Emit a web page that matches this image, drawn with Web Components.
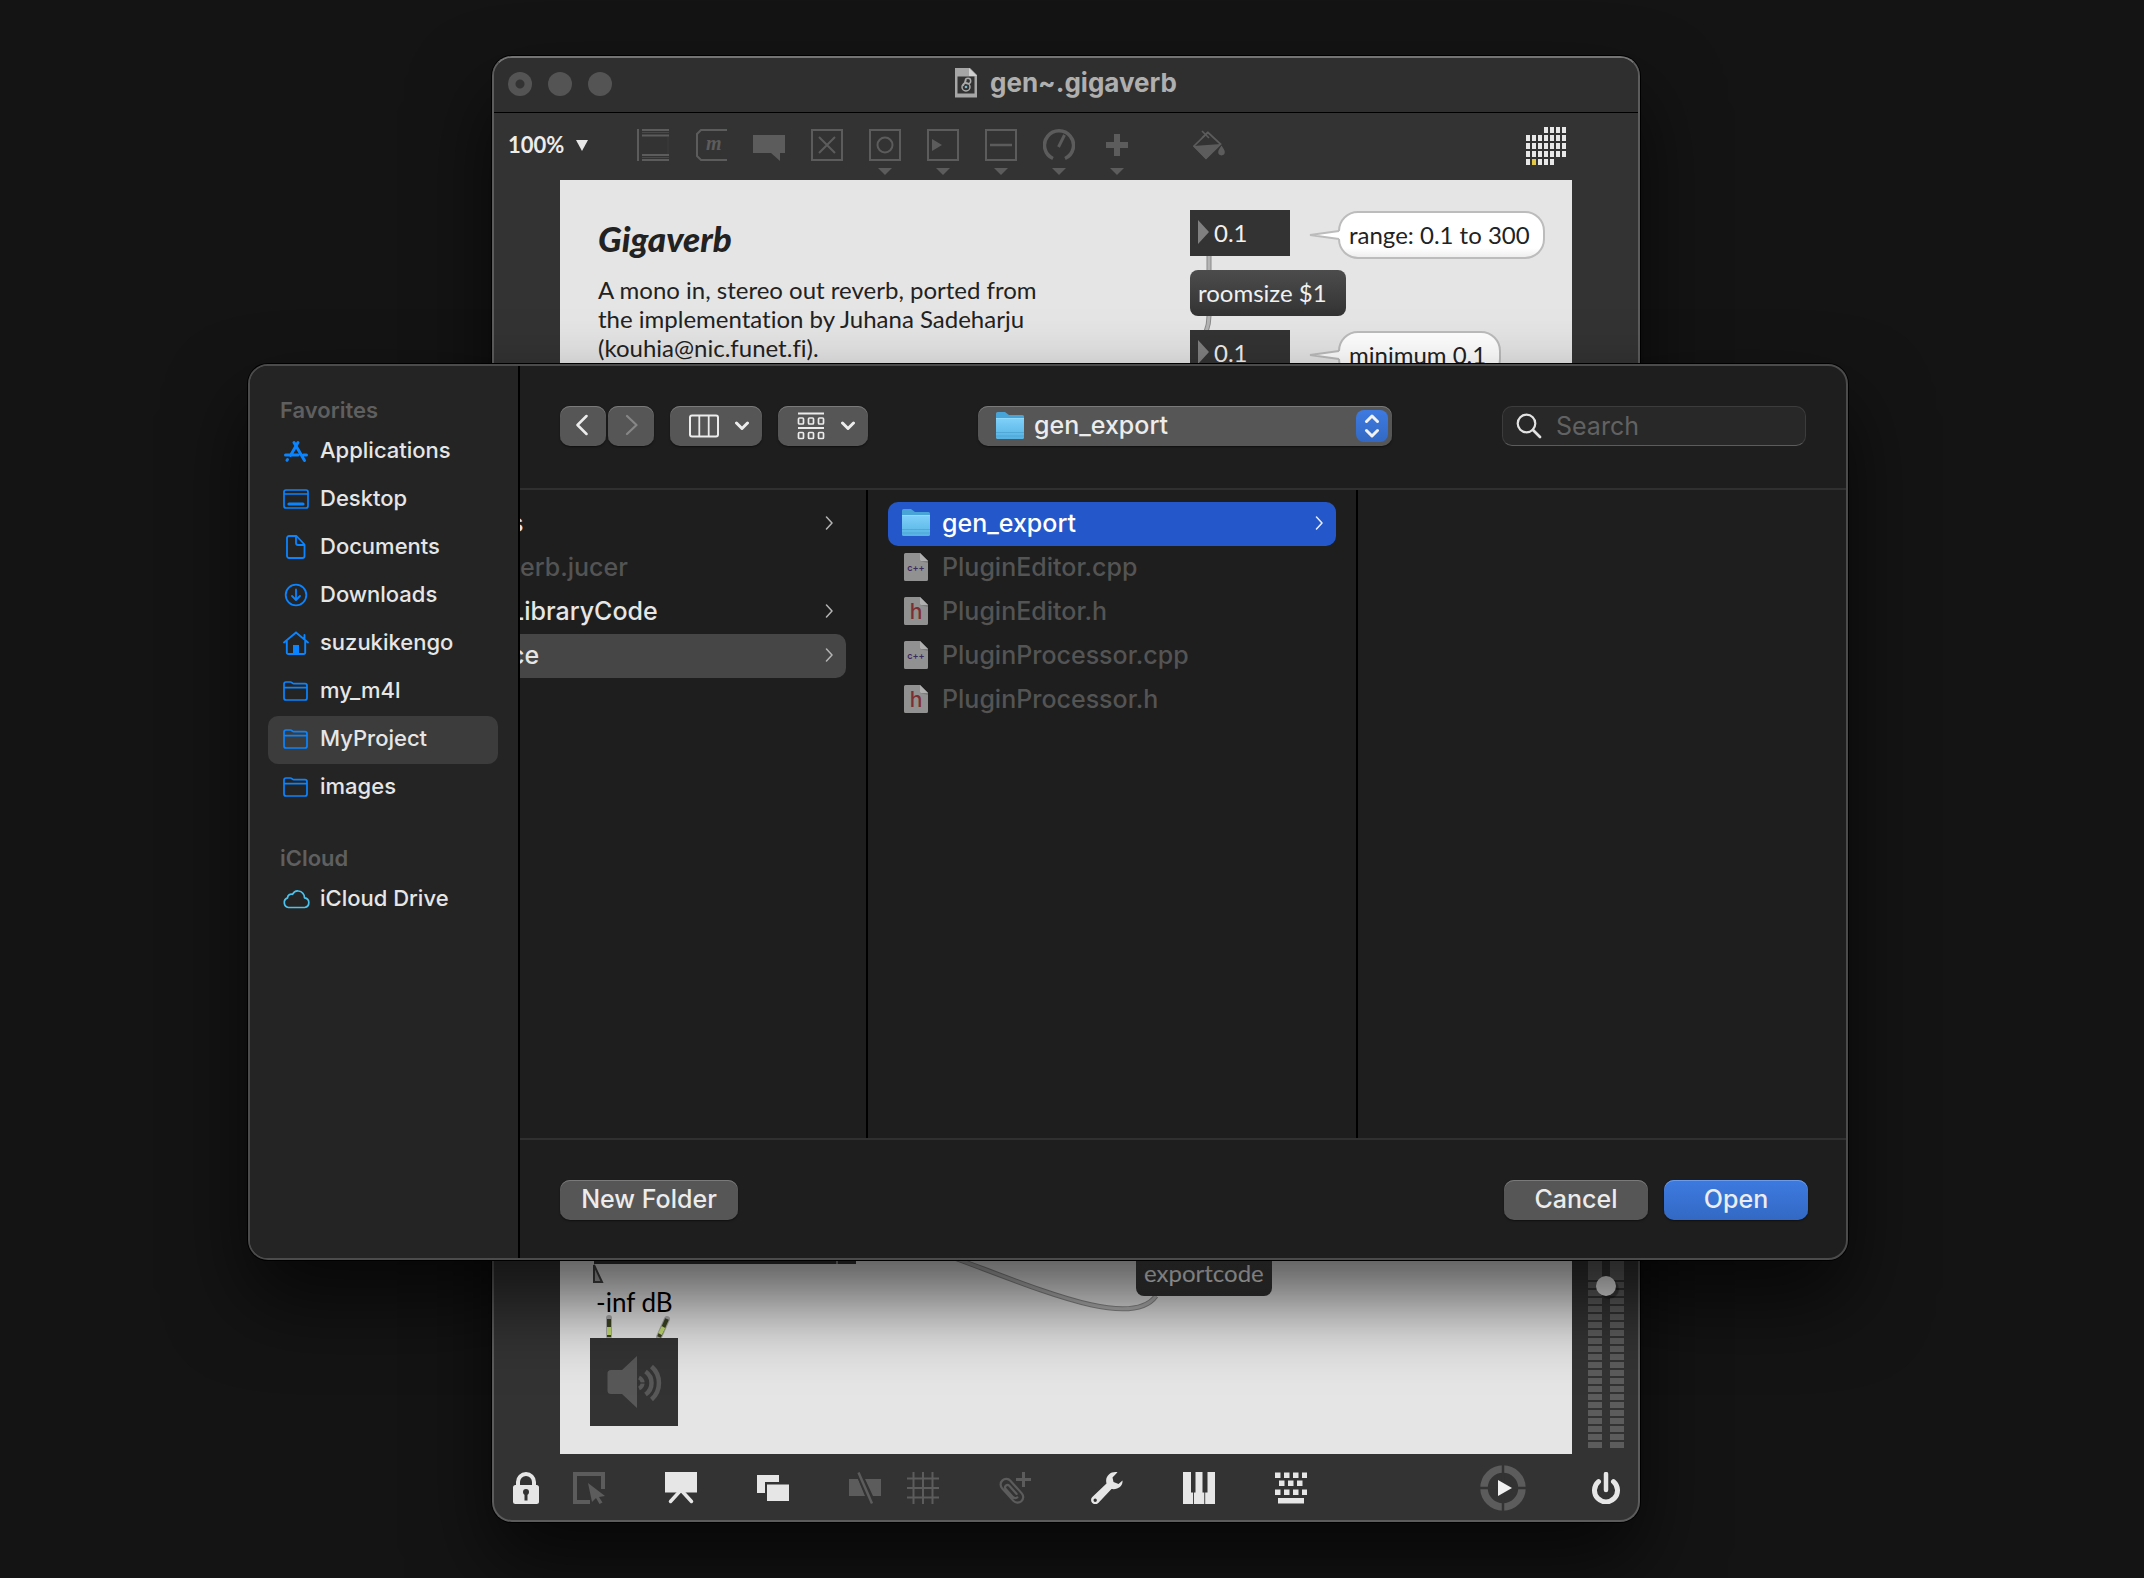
<!DOCTYPE html>
<html lang="en">
<head>
<meta charset="utf-8">
<title>gen~.gigaverb</title>
<style>
  html, body { margin: 0; height: 100%; }
  body { background: #141414; font-family: Inter, "Liberation Sans", sans-serif; overflow: hidden; }
</style>
</head>
<body>
<desk-top>
  <patcher-window heading="gen~.gigaverb">
    <patch-canvas></patch-canvas>
  </patcher-window>
  <open-panel>
    <side-group slot="places" label="Favorites">
      <side-item icon="apps">Applications</side-item>
      <side-item icon="desktop">Desktop</side-item>
      <side-item icon="doc">Documents</side-item>
      <side-item icon="download">Downloads</side-item>
      <side-item icon="home">suzukikengo</side-item>
      <side-item icon="folder">my_m4l</side-item>
      <side-item icon="folder" current>MyProject</side-item>
      <side-item icon="folder">images</side-item>
    </side-group>
    <side-group slot="places" label="iCloud">
      <side-item icon="cloud">iCloud Drive</side-item>
    </side-group>
    <file-column slot="columns" scrolled>
      <file-row more>s</file-row>
      <file-row dim>erb.jucer</file-row>
      <file-row more>LibraryCode</file-row>
      <file-row more open>ce</file-row>
    </file-column>
    <file-column slot="columns">
      <file-row icon="bluefolder" more selected>gen_export</file-row>
      <file-row icon="cpp" dim>PluginEditor.cpp</file-row>
      <file-row icon="header" dim>PluginEditor.h</file-row>
      <file-row icon="cpp" dim>PluginProcessor.cpp</file-row>
      <file-row icon="header" dim>PluginProcessor.h</file-row>
    </file-column>
    <file-column slot="columns"></file-column>
  </open-panel>
</desk-top>

<script>
const G = '#5c5c5c', W = '#e6e6e6', B = '#0a84ff';
const svg = (w, h, body) => `<svg width="${w}" height="${h}" viewBox="0 0 ${w} ${h}" fill="none" aria-hidden="true">${body}</svg>`;
const frame = `<path d="M1 1h30v30H1z" stroke="${G}" stroke-width="2"/>`;

const gridLogo = () => {
  let s = '';
  for (let r = 0; r < 5; r++) for (let c = 0; c < 7; c++) {
    if ((r === 0 && c < 3) || (r === 4 && c > 4)) continue;
    s += `<rect x="${c * 6}" y="${r * 8}" width="4" height="6" fill="${r === 4 && c === 1 ? '#e2c846' : '#e8e8e8'}"/>`;
  }
  return svg(40, 38, s);
};
const keys = () => {
  let s = '';
  [[0, 0, 4], [4, 8, 3], [0, 17, 4]].forEach(([x, y, n]) => {
    for (let i = 0; i < n; i++) s += `<rect x="${x + i * 9}" y="${y + 0.5}" width="5.5" height="5.5" fill="${W}"/>`;
  });
  return svg(32, 32, s + `<rect x="3" y="26" width="26" height="5.5" fill="${W}"/>`);
};
const page = body => svg(24, 28, `<path d="M1.500 0H16l8 8v18.500a1.500 1.500 0 0 1-1.500 1.500h-21A1.500 1.500 0 0 1 0 26.500v-25A1.500 1.500 0 0 1 1.500 0z" fill="#919191"/><path d="M16 0l8 8h-7a1 1 0 0 1-1-1z" fill="#b0b0b0"/><path d="M16 7a1 1 0 0 0 1 1h7v2l-8-2z" fill="#7c7c7c"/>${body}`);

const ICONS = {
  object: svg(32, 32, `<path d="M1 0v32M5 1h27M5 6.500h27M5 26h27M5 31h27" stroke="${G}" stroke-width="2"/><path d="M5 3.500h27M5 28.500h27" stroke="#484848"/><path d="M31 8v17" stroke="#3c3c3c"/>`),
  message: svg(32, 32, `<path d="M32 1H6L2 5v22l4 4h26" stroke="${G}" stroke-width="2"/><text x="11" y="21" font-family="Liberation Serif, serif" font-style="italic" font-weight="bold" font-size="20" fill="${G}">m</text>`),
  comment: svg(32, 32, `<path d="M0 6h32v18h-5v8l-9-8H0z" fill="${G}"/>`),
  toggle: svg(32, 32, frame + `<path d="M8 8l16 16M24 8L8 24" stroke="${G}" stroke-width="2"/>`),
  bang: svg(32, 32, frame + `<circle cx="16" cy="16" r="7.500" stroke="${G}" stroke-width="2"/>`),
  playbar: svg(32, 32, frame + `<path d="M5 10l10 6-10 6z" fill="${G}"/>`),
  slider: svg(32, 32, frame + `<path d="M5 16h22" stroke="${G}" stroke-width="2.500"/>`),
  dial: svg(32, 32, `<path d="M10 29.500A14.500 14.500 0 1 1 22 29.500" stroke="${G}" stroke-width="3.500"/><path d="M15.500 18l6-12" stroke="${G}" stroke-width="3"/>`),
  plus: svg(32, 32, `<path d="M16 5v22M5 16h22" stroke="${G}" stroke-width="6"/>`),
  bucket: svg(32, 32, `<path d="M1 17L15 3.500 27.500 15 13 29z" stroke="${G}" stroke-width="1.700"/><path d="M0 17l28.500-2L13 30.500z" fill="${G}"/><path d="M9 2l7 7M15 3l-6 6" stroke="${G}" stroke-width="1.600"/><path d="M28.500 16.500c1.500 2.500 3.300 4.500 3.300 6.600a3.300 3.300 0 0 1-6.600 0c0-2.100 1.800-4.100 3.300-6.600z" fill="${G}"/>`),
  caret: svg(14, 7, `<path d="M0 0h14l-7 7z" fill="${G}"/>`),
  logo: gridLogo(),
  lock: svg(32, 32, `<path d="M8 14V10a8 8 0 0 1 16 0v4" stroke="${W}" stroke-width="4"/><rect x="3" y="13" width="26" height="19" rx="2.500" fill="${W}"/><circle cx="16" cy="20" r="3" fill="#333"/><path d="M16 20v8.500" stroke="#333" stroke-width="3"/>`),
  select: svg(32, 32, `<path d="M30 17V2H2v28h15" stroke="${G}" stroke-width="4"/><path d="M15 11l17 13-6 1 3.500 5.500-3 1.500-3.500-6-4 4z" fill="${G}"/>`),
  present: svg(32, 32, `<path d="M0 0h32v20.500H0z" fill="${W}"/><path d="M16 18L5.500 29.500M16 18l10.500 11.500" stroke="${W}" stroke-width="3.500" stroke-linecap="round"/>`),
  windows: svg(32, 32, `<path d="M0 3h22v7H8v11H0z" fill="${W}"/><path d="M10 12.500h22V29H10z" fill="${W}"/>`),
  cordoff: svg(32, 32, `<path d="M0 7h9l7 17H0zM16 7h16v17h-8z" fill="${G}"/><path d="M9.500 0.500L23 31.500" stroke="#333" stroke-width="6"/><path d="M9.500 0.500L23 31.500" stroke="${G}" stroke-width="2.500"/>`),
  grid: svg(32, 32, `<path d="M6.500 0v32M16 0v32M25.500 0v32M0 6.500h32M0 16h32M0 25.500h32" stroke="${G}" stroke-width="2"/>`),
  clip: svg(32, 32, `<path d="M24.500 0v15M17 7.500h15" stroke="${G}" stroke-width="3"/><g transform="translate(12.500 18.500) rotate(-42)"><path d="M1.500 6V-5a2.400 2.400 0 0 0-4.800 0V7a4.700 4.700 0 0 0 0 0M-3.300-5V6a3.300 3.300 0 0 0 3 3M5.700-2V-8a5.600 5.600 0 0 0-11.200 0V9a5.600 5.600 0 0 0 11.200 0V-3" stroke="${G}" stroke-width="2.200" stroke-linecap="round"/></g>`),
  wrench: svg(32, 32, `<path fill-rule="evenodd" d="M26.500 0.300C20-1 13.500 4 15.500 11.500L1.300 25a4.200 4.200 0 0 0 6 6L20.500 17C27 18 32 14 31.500 8.500L27.500 12 22.500 10 21.500 5.500zM4.200 26.500a1.700 1.700 0 1 1 0 3.400 1.700 1.700 0 0 1 0-3.400z" fill="${W}"/>`),
  piano: svg(32, 32, `<path d="M0 0h8v20.500h2V32H0zM12.500 0h7v20.500h1.800V32H10.900V20.500h1.600zM24.500 0H32v32H22.200V20.500h2.300z" fill="${W}"/>`),
  keyboard: keys(),
  transport: svg(46, 46, `<circle cx="23" cy="23" r="19" stroke="${G}" stroke-width="7.500"/><path d="M23 0v46M0 23h46" stroke="#333" stroke-width="2.500"/><path d="M18 15l14 8-14 8z" fill="#f0f0f0"/>`),
  power: svg(32, 32, `<path d="M16 2v16" stroke="${W}" stroke-width="4.500" stroke-linecap="round"/><path d="M8.500 9.700a11.500 11.500 0 1 0 15 0" stroke="${W}" stroke-width="5" stroke-linecap="round"/>`),
  maxdoc: svg(22, 30, `<path d="M0 0h15l7 7v22.500H0z" fill="#a6a6a6"/><path d="M14 0l8 8h-8z" fill="#d0d0d0"/><path d="M2.500 8.500h17v17h-17z" fill="#333"/><circle cx="11" cy="19" r="4" stroke="#aaa" stroke-width="1.500"/><circle cx="13" cy="13" r="2.700" stroke="#aaa" stroke-width="1.500"/><circle cx="11" cy="19" r="1.300" fill="#7fb7c9"/><path d="M8 18l3-6" stroke="#aaa" stroke-width="1.500"/>`),
  apps: svg(28, 28, `<g stroke="${B}" stroke-width="3" stroke-linecap="round"><path d="M12 5.500L22.500 23.500M16 5.500L8.500 18.500M5 23.300l.5-.8M3.500 18H16M21.500 18h3"/></g>`),
  desktop: svg(28, 28, `<rect x="2" y="5" width="24" height="18" rx="2" stroke="${B}" stroke-width="1.700"/><path d="M2 9h24" stroke="${B}" stroke-width="1.500"/><path d="M7 19h14" stroke="${B}" stroke-width="3.200" stroke-linecap="round"/>`),
  doc: svg(28, 28, `<path d="M7 3h7.500l8 8.500V23a2 2 0 0 1-2 2H7a2 2 0 0 1-2-2V5a2 2 0 0 1 2-2zM14 3v7a2 2 0 0 0 2 2h6.500" stroke="${B}" stroke-width="1.800" stroke-linejoin="round"/>`),
  download: svg(28, 28, `<circle cx="14" cy="14" r="10.300" stroke="${B}" stroke-width="1.800"/><path d="M14 8.500v10M10 15l4 4 4-4" stroke="${B}" stroke-width="1.800" stroke-linecap="round" stroke-linejoin="round"/>`),
  home: svg(28, 28, `<path d="M2 13.500L14 3.500l12 10M4.800 12v11.500a1.500 1.500 0 0 0 1.500 1.500h15.400a1.500 1.500 0 0 0 1.500-1.500V12M22.500 10V6" stroke="${B}" stroke-width="1.900" stroke-linecap="round"/><path d="M11 16h6v8.500h-6z" fill="${B}"/>`),
  folder: svg(28, 28, `<path d="M2 7a2 2 0 0 1 2-2h4.500c1.200 0 2 1.700 3.200 1.700H23a2 2 0 0 1 2 2V21a2 2 0 0 1-2 2H4a2 2 0 0 1-2-2zM2 10.700h23" stroke="${B}" stroke-width="1.700"/>`),
  cloud: svg(28, 28, `<path d="M6.500 22.500a5 5 0 0 1-1-9.600c.2-2.800 2.600-4.400 5-3.600C12 6.500 14.500 5.700 16.500 6a6.700 6.700 0 0 1 6 6.800 4.900 4.900 0 0 1 .2 9.700z" stroke="#4ac4ee" stroke-width="1.700" stroke-linejoin="round"/>`),
  bluefolder: svg(28, 28, `<defs><linearGradient id="f" x1="0" y1="0" x2="0" y2="1"><stop offset="0" stop-color="#7fd1fa"/><stop offset="1" stop-color="#56b2e2"/></linearGradient></defs><path d="M0 1.500A1.500 1.500 0 0 1 1.500 0H9l4 3h13.500A1.500 1.500 0 0 1 28 4.500V10H0z" fill="#48a3d6"/><path d="M0 6h28v19.500a1.500 1.500 0 0 1-1.500 1.500h-25A1.500 1.500 0 0 1 0 25.500z" fill="url(#f)"/><path d="M0 6.500h28" stroke="#9be0ff" stroke-opacity=".6"/><path d="M0 20.500h28M0 24h28" stroke="#4299c8" stroke-opacity=".55"/>`),
  cpp: page(`<text x="12" y="18" text-anchor="middle" font-family="Inter, sans-serif" font-weight="600" font-size="9" fill="#3c2c5e">c++</text>`),
  header: page(`<text x="12" y="22" text-anchor="middle" font-family="Inter, sans-serif" font-size="21" fill="#7c2f33">h</text>`),
  back: svg(14, 24, `<path d="M10.500 3L1.500 12l9 9" stroke="#ececec" stroke-width="2.500" stroke-linecap="round" stroke-linejoin="round"/>`),
  forward: svg(14, 24, `<path d="M3 3l9.500 9L3 21" stroke="#868686" stroke-width="2.200" stroke-linecap="round" stroke-linejoin="round"/>`),
  chevron: svg(10, 14, `<path d="M2.500 1l5.500 6-5.500 6" stroke="currentColor" stroke-width="1.500" stroke-linecap="round" stroke-linejoin="round"/>`),
  down: svg(16, 10, `<path d="M2.500 2L8 7.500 13.500 2" stroke="#ececec" stroke-width="3" stroke-linecap="round" stroke-linejoin="round"/>`),
  columns: svg(30, 24, `<rect x="1" y="1.500" width="28" height="21" rx="2" stroke="#ececec" stroke-width="2"/><path d="M10.300 2v20M19.700 2v20" stroke="#ececec" stroke-width="1.800"/>`),
  group: svg(28, 28, `<path d="M1 1.500h26M1 16h26" stroke="#ececec" stroke-width="2"/><g stroke="#ececec" stroke-width="1.700"><rect x="1.500" y="6" width="5" height="6" rx="1"/><rect x="11.500" y="6" width="5" height="6" rx="1"/><rect x="21.500" y="6" width="5" height="6" rx="1"/><rect x="1.500" y="20.500" width="5" height="6" rx="1"/><rect x="11.500" y="20.500" width="5" height="6" rx="1"/><rect x="21.500" y="20.500" width="5" height="6" rx="1"/></g>`),
  updown: svg(16, 24, `<path d="M2.500 7.500L8 2l5.500 5.500M2.500 16.500L8 22l5.500-5.500" stroke="#f2f2f2" stroke-width="3" stroke-linecap="round" stroke-linejoin="round"/>`),
  search: svg(26, 26, `<circle cx="10.500" cy="10.500" r="8.800" stroke="#e2e2e2" stroke-width="2.200"/><path d="M17 17l7 7" stroke="#e2e2e2" stroke-width="2.800" stroke-linecap="round"/>`),
  triangle: svg(12, 11, `<path d="M0 0h12L6 11z" fill="#e8e8e8"/>`),
  speaker: svg(88, 88, `<path d="M17.500 35.500A3.500 3.500 0 0 1 21 32h11l15-14v52L32 56H21a3.500 3.500 0 0 1-3.500-3.500z" fill="#585858"/><g stroke="#585858" stroke-width="4.500"><path d="M49 39.500a6 6 0 0 1 0 11" stroke-width="4"/><path d="M55.500 33.500a14 14 0 0 1 0 23"/><path d="M61.500 28.500a22 22 0 0 1 0 33"/></g><path d="M47.500 45h9" stroke="#333" stroke-width="1.200"/>`)
};

class Base extends HTMLElement {
  connectedCallback() {
    if (this.shadowRoot) return;
    this.attachShadow({ mode: 'open' }).innerHTML = this.view();
  }
  attr(n, d = '') { return this.getAttribute(n) ?? d; }
}
const define = (name, cls) => customElements.define(name, cls);

define('ui-icon', class extends Base {
  view() { return `<style>:host{display:inline-flex;flex:none}svg{display:block}</style>${ICONS[this.attr('name')] || ''}`; }
});

define('desk-top', class extends Base {
  view() {
    return `<style>
      :host{display:block;position:relative;height:100vh;overflow:hidden}
      ::slotted(*){position:absolute;box-sizing:border-box;overflow:hidden;border:2px solid}
      ::slotted(patcher-window){inset:56px 504px 56px 492px;border-color:#747474 #5c5c5c #5c5c5c;border-radius:20px;box-shadow:0 0 0 1px #000,0 40px 80px rgba(0,0,0,.65)}
      ::slotted(open-panel){inset:364px 296px 318px 248px;border-color:#4b4b4b;border-radius:20px;box-shadow:0 0 0 1px #000,0 40px 80px rgba(0,0,0,.65)}
    </style><slot></slot>`;
  }
});

define('tool-button', class extends Base {
  view() {
    return `<style>
      :host{display:block;flex:none}
      button{display:flex;flex-direction:column;align-items:center;gap:7px;padding:0;border:0;background:none}
    </style><button type="button" aria-label="${this.attr('label')}"><ui-icon name="${this.attr('icon')}"></ui-icon>${this.hasAttribute('menu') ? '<ui-icon name="caret"></ui-icon>' : ''}</button>`;
  }
});

define('patcher-window', class extends Base {
  view() {
    const t = (icon, label, menu = '') => `<tool-button icon="${icon}" label="${label}" ${menu}></tool-button>`;
    return `<style>
      :host{display:flex;flex-direction:column;background:#333}
      header{display:flex;align-items:center;height:54px;background:#2f2f2f;border-bottom:1px solid #000;position:relative}
      .lights{display:flex;gap:16px;padding:0 0 2px 14px}
      .lights button{width:24px;height:24px;border:0;padding:0;border-radius:50%;background:#545454}
      .lights button:first-child{background:radial-gradient(circle,#333 0 4px,#545454 5px)}
      .title{position:absolute;inset:0;display:flex;align-items:center;justify-content:center;gap:13px;margin:0;padding-bottom:4px;font:700 26px/32px Inter,sans-serif;color:#afafaf;pointer-events:none}
      .tools{display:flex;align-items:flex-start;height:51px;padding:16px 72px 0 14px;gap:26px}
      .zoom{display:flex;align-items:center;gap:11px;width:103px;height:32px}
      select{appearance:none;border:0;background:none;padding:0;margin:0;color:#ececec;font:700 22px/28px Lato,sans-serif}
      .gap{margin-left:34px}
      .push{margin:-2px 0 0 auto}
      .middle{flex:1;display:flex;min-height:0}
      .rail{width:66px;flex:none;display:flex;justify-content:center;align-items:flex-end}
      ::slotted(patch-canvas){flex:1}
      input{appearance:none;writing-mode:vertical-lr;direction:rtl;width:36px;height:240px;margin:0 0 6px 2px;
        background:
          linear-gradient(90deg,transparent 14px,#333 14px 22px,transparent 22px),
          repeating-linear-gradient(to top,#5c5c5c 0 6px,#333 6px 8px) bottom/100% 168px no-repeat,
          #5c5c5c}
      input::-webkit-slider-runnable-track{width:36px;height:240px}
      input::-webkit-slider-thumb{appearance:none;width:20px;height:20px;margin-left:8px;border-radius:50%;background:#e8e8e8;box-shadow:3px 3px 1px rgba(0,0,0,.35)}
      footer{display:flex;align-items:center;gap:60px;height:66px;padding:2px 16px 0;box-sizing:border-box}
      .set{display:flex;gap:26px}.first{gap:31px}
      .run{gap:64px;align-items:center;margin-left:auto}
    </style>
    <header>
      <div class="lights"><button aria-label="Close"></button><button aria-label="Minimize"></button><button aria-label="Zoom"></button></div>
      <h1 class="title"><ui-icon name="maxdoc"></ui-icon><span>${this.attr('heading')}</span></h1>
    </header>
    <div class="tools">
      <label class="zoom"><select aria-label="Zoom level"><option>100%</option></select><ui-icon name="triangle"></ui-icon></label>
      ${t('object', 'Object')}${t('message', 'Message')}${t('comment', 'Comment')}${t('toggle', 'Toggle')}
      ${t('bang', 'Button', 'menu')}${t('playbar', 'Playlist', 'menu')}${t('slider', 'Slider', 'menu')}${t('dial', 'Dial', 'menu')}${t('plus', 'Add', 'menu')}
      <tool-button class="gap" icon="bucket" label="Format"></tool-button>
      <ui-icon class="push" name="logo"></ui-icon>
    </div>
    <div class="middle">
      <div class="rail"></div><slot></slot>
      <div class="rail"><input type="range" min="0" max="100" value="69" aria-label="Output level"></div>
    </div>
    <footer>
      <div class="set first">${t('lock', 'Lock')}${t('select', 'Operate while unlocked')}</div>
      ${t('present', 'Presentation')}${t('windows', 'New view')}
      <div class="set">${t('cordoff', 'Patch cords')}${t('grid', 'Grid')}</div>
      ${t('clip', 'Add clipping')}${t('wrench', 'Debug')}${t('piano', 'MIDI')}${t('keyboard', 'Keyboard')}
      <div class="set run">${t('transport', 'Transport')}${t('power', 'Audio on/off')}</div>
    </footer>`;
  }
});

define('number-box', class extends Base {
  view() {
    return `<style>:host{display:flex;align-items:center;gap:5px;box-sizing:border-box;width:100px;height:46px;padding:0 0 2px 8px;background:#333;color:#f0f0f0}
    i{border:12px solid transparent;border-left:11px solid #808080;border-right:0}</style><i></i><slot></slot>`;
  }
});
define('message-box', class extends Base {
  view() {
    return `<style>:host{display:flex;align-items:center;box-sizing:border-box;height:46px;padding:0 0 2px 8px;border-radius:8px;background:linear-gradient(#4c4c4c,#333);color:#f0f0f0}</style><slot></slot>`;
  }
});
define('bubble-note', class extends Base {
  view() {
    return `<style>:host{display:flex}svg{display:block;flex:none;margin:18px -2px 0 0;position:relative}
    div{display:flex;align-items:center;box-sizing:border-box;height:48px;padding:0 13px 2px 9px;border:2px solid #bcbcbc;border-radius:20px;background:linear-gradient(#fff 80%,#eee)}</style>
    <svg width="32" height="12" viewBox="0 0 32 12"><path d="M32 2L2 6l30 4z" fill="#fff"/><path d="M31 2L2 6l29 4" fill="none" stroke="#bcbcbc" stroke-width="2"/></svg><div><slot></slot></div>`;
  }
});

define('patch-canvas', class extends Base {
  view() {
    return `<style>
      :host{display:block;position:relative;overflow:hidden;background:#e5e5e5;color:#222;font:400 24px/29px Lato,sans-serif;font-variant-ligatures:none}
      /* nodes of the patch sit freely on the canvas */
      .n,.cords{position:absolute}
      h2{margin:0;font:italic 900 35px/42px Lato,sans-serif}
      p{margin:0;white-space:nowrap}
      .meter{width:262px;height:24px;background:linear-gradient(90deg,#333 242px,#888 242px 244px,#333 244px)}
      .dac{width:88px;height:88px;padding:0;border:0;background:#333}
      .level{color:#000;font-size:26px}
    </style>
    <svg class="cords" style="left:0;top:0" width="1012" height="1274" viewBox="0 0 1012 1274" fill="none">
      <g stroke="#8a8a8a" stroke-width="5"><path d="M649 76v14M649 136q0 8-3 16"/><path d="M378 1072C470 1105 570 1152 596 1116"/></g>
      <g stroke="#b4b4b4" stroke-width="3"><path d="M649 76v14M649 136q0 8-3 16"/><path d="M378 1072C470 1105 570 1152 596 1116"/></g>
      <path d="M34 1085l8 17h-8z" fill="#aaa" stroke="#444" stroke-width="2"/>
      <g stroke-width="6" stroke="#aaa" stroke-linecap="round"><path d="M49 1138v18M107 1139l-8 18"/></g>
      <g stroke-width="4" stroke="#3b4320"><path d="M49 1139v18M107 1139l-8 18"/></g>
      <g stroke-width="4" stroke="#c3dd72"><path d="M49 1147v8M103.500 1147l-3.500 7"/></g>
    </svg>
    <h2 class="n" style="left:38px;top:37px">Gigaverb</h2>
    <p class="n" style="left:38px;top:95px">A mono in, stereo out reverb, ported from<br>the implementation by Juhana Sadeharju<br>(kouhia@nic.funet.fi).</p>
    <number-box class="n" style="left:630px;top:30px">0.1</number-box>
    <bubble-note class="n" style="left:748px;top:31px">range: 0.1 to 300</bubble-note>
    <message-box class="n" style="left:630px;top:90px;width:156px">roomsize $1</message-box>
    <number-box class="n" style="left:630px;top:150px">0.1</number-box>
    <bubble-note class="n" style="left:748px;top:151px">minimum 0.1</bubble-note>
    <message-box class="n" style="left:576px;top:1070px;width:136px">exportcode</message-box>
    <div class="n meter" style="left:34px;top:1060px"></div>
    <p class="n level" style="left:36px;top:1108px">-inf dB</p>
    <button class="n dac" style="left:30px;top:1158px" aria-label="Audio output"><ui-icon name="speaker"></ui-icon></button>`;
  }
});

define('side-group', class extends Base {
  view() {
    return `<style>:host{display:block}:host(:not(:first-of-type)){margin-top:36px}
    h2{margin:0;height:28px;padding-left:12px;font:600 22px/20px Inter,sans-serif;color:#5f5f5f}
    nav{display:flex;flex-direction:column}</style><h2>${this.attr('label')}</h2><nav><slot></slot></nav>`;
  }
});
define('side-item', class extends Base {
  view() {
    return `<style>:host{display:block}
    a{display:flex;align-items:center;gap:10px;height:48px;padding:0 14px;box-sizing:border-box;border-radius:10px;color:#e6e6e6;text-decoration:none;font:500 22px/28px Inter,sans-serif}
    span{padding-bottom:4px}ui-icon{padding-bottom:2px}
    :host([current]) a{background:#3c3c3c}</style><a href="#"><ui-icon name="${this.attr('icon')}"></ui-icon><span><slot></slot></span></a>`;
  }
});
define('file-column', class extends Base {
  view() {
    return `<style>:host{display:block;box-sizing:border-box;width:490px;flex:none;padding:12px 20px;border-right:2px solid #000;overflow:hidden}
    :host(:last-of-type){width:auto;flex:1;border:0}
    :host([scrolled]){width:348px;padding-left:0}</style><slot></slot>`;
  }
});
define('file-row', class extends Base {
  view() {
    const icon = this.attr('icon');
    return `<style>
    :host{display:flex;align-items:center;box-sizing:border-box;height:44px;padding:0 12px 2px 14px;border-radius:10px;color:#e6e6e6;font:500 25px/32px Inter,sans-serif}
    :host([dim]){color:#545454;font-weight:450}
    :host([selected]){background:#2457c9;color:#fff}
    :host([open]){background:#464646;border-radius:0 10px 10px 0}
    .i{width:40px;display:flex}
    .i ui-icon{width:28px;justify-content:center}
    .bare{margin-left:-24px}
    :host([dim]) .bare{margin-left:-14px}
    .more{margin-left:auto;color:#b4b4b4}
    :host([selected]) .more{color:#e8eefc}
    </style>${icon ? `<span class="i"><ui-icon name="${icon}"></ui-icon></span>` : ''}<span class="${icon ? '' : 'bare'}"><slot></slot></span>${this.hasAttribute('more') ? '<ui-icon class="more" name="chevron"></ui-icon>' : ''}`;
  }
});
define('push-button', class extends Base {
  view() {
    return `<style>:host{display:block;flex:none}
    button{display:flex;align-items:center;justify-content:center;gap:15px;width:100%;height:40px;padding:0 16px;border:0;border-radius:10px;background:#565656;box-shadow:inset 0 1px 0 #7a7a7a,0 1px 2px rgba(0,0,0,.5);color:#ececec;font:500 25px/36px Inter,sans-serif;white-space:nowrap}
    :host([icon]) button{padding:0 0 2px}
    :host([menu]) button{padding:0 0 0 6px}
    span{padding-bottom:2px}
    :host([primary]) button{background:linear-gradient(#3d7ae0,#3369c4);box-shadow:inset 0 1px 0 #6b9bea,0 1px 2px rgba(0,0,0,.5)}
    </style><button type="button" ${this.hasAttribute('label') ? `aria-label="${this.attr('label')}"` : ''}>${this.hasAttribute('icon') ? `<ui-icon name="${this.attr('icon')}"></ui-icon>${this.hasAttribute('menu') ? '<ui-icon name="down"></ui-icon>' : ''}` : '<span><slot></slot></span>'}</button>`;
  }
});

define('open-panel', class extends Base {
  view() {
    return `<style>
      :host{display:flex;background:#1e1e1e}
      aside{width:268px;flex:none;box-sizing:content-box;border-right:2px solid #000;background:#242424}
      .places{padding:34px 20px 0 18px}
      main{flex:1;min-width:0;display:flex;flex-direction:column}
      header{display:flex;align-items:flex-start;height:82px;padding:40px 40px 0;border-bottom:2px solid #303030}
      .nav{display:flex;gap:2px}
      .nav push-button{width:46px}
      .view{width:92px;margin-left:16px}.sort{width:90px;margin-left:16px}
      .where{display:flex;align-items:center;width:414px;height:40px;box-sizing:border-box;margin:0 auto;padding:0 4px 0 18px;border-radius:10px;background:#565656;box-shadow:inset 0 1px 0 #7a7a7a,0 1px 2px rgba(0,0,0,.5);gap:10px}
      select{appearance:none;flex:1;min-width:0;height:40px;padding:0 0 2px;border:0;background:none;color:#ececec;font:500 25px/36px Inter,sans-serif}
      .step{display:flex;align-items:center;justify-content:center;width:32px;height:32px;border-radius:8px;background:linear-gradient(#3d7ae0,#3369c4)}
      .find{display:flex;align-items:center;gap:14px;width:304px;height:40px;box-sizing:border-box;padding:0 13px;border:1px solid #3c3c3c;border-bottom-color:#5c5c5c;border-radius:10px;background:#282828}
      input{flex:1;min-width:0;border:0;padding:0;background:none;outline:0;color:#e6e6e6;font:400 25px/32px Inter,sans-serif}
      input::placeholder{color:#626262;opacity:1}
      .cols{flex:1;display:flex;min-height:0}
      footer{display:flex;align-items:flex-start;gap:16px;height:78px;padding:40px 38px 0 40px;border-top:2px solid #303030;box-sizing:content-box}
      .act{width:144px}
      .new{width:178px;margin-right:auto}
    </style>
    <aside><div class="places"><slot name="places"></slot></div></aside>
    <main>
      <header>
        <div class="nav"><push-button icon="back" label="Back"></push-button><push-button icon="forward" label="Forward"></push-button></div>
        <push-button class="view" icon="columns" menu label="View as columns"></push-button>
        <push-button class="sort" icon="group" menu label="Group items"></push-button>
        <label class="where"><ui-icon name="bluefolder"></ui-icon><select aria-label="Location"><option>gen_export</option></select><span class="step"><ui-icon name="updown"></ui-icon></span></label>
        <label class="find"><ui-icon name="search"></ui-icon><input type="text" placeholder="Search" aria-label="Search"></label>
      </header>
      <div class="cols"><slot name="columns"></slot></div>
      <footer>
        <push-button class="new">New Folder</push-button>
        <push-button class="act">Cancel</push-button>
        <push-button class="act" primary>Open</push-button>
      </footer>
    </main>`;
  }
});
</script>
</body>
</html>
